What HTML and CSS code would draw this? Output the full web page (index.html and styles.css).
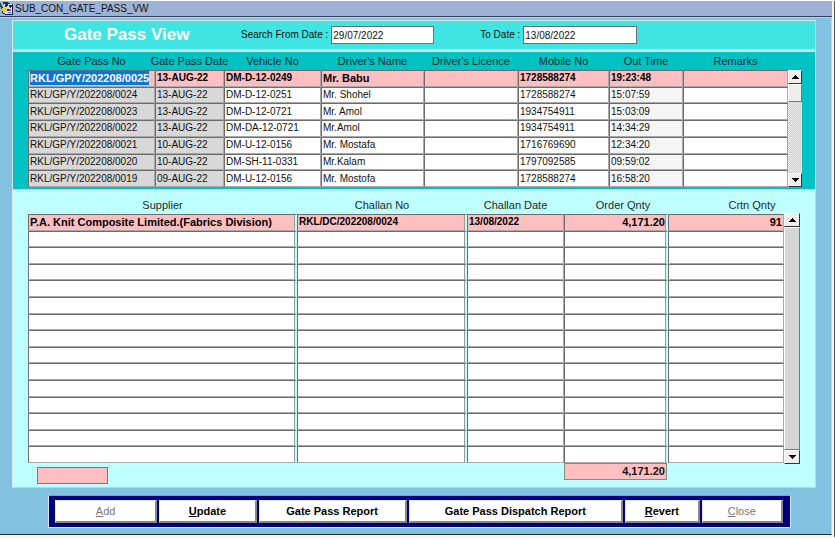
FILE: index.html
```html
<!DOCTYPE html>
<html lang="en">
<head>
<meta charset="utf-8">
<title>SUB_CON_GATE_PASS_VW</title>
<link rel="stylesheet" href="styles.css">
</head>
<body>
<div class="window">
  <header class="titlebar">
    <svg class="app-icon" viewBox="0 0 14 15" aria-hidden="true">
      <path d="M0 2h1v2h1v2h1v2H1V6H0z" fill="#0b4a54"/>
      <path d="M4 1h4v1h2v1h2v10H3V5h1z" fill="#d4dcf0"/>
      <path d="M3 1h5v1h2v1H8v1H5V3H3z" fill="#18306e"/>
      <path d="M3 5h2v2h2v2H6v2H4v2H3v-3H2V7h1z" fill="#e4d52c"/>
      <path d="M5 4h3v1H7v1H5zM9 4h3v2h-1v1h-1V6H9zM7 8h2v2H7z" fill="#35246c"/>
      <path d="M9 8h2v2H9z" fill="#c83e62"/>
      <path d="M12 3h1v11H5v-1h7zM2 10h1v2h2v1H3v-1H2z" fill="#18204c"/>
      <path d="M8 11h3v1H8z" fill="#4674d0"/>
    </svg>
    <span>SUB_CON_GATE_PASS_VW</span>
  </header>

  <main class="canvas">
    <form class="panel search">
      <h1>Gate Pass View</h1>
      <label for="from">Search From Date :</label>
      <input id="from" class="from" type="text" value="29/07/2022">
      <label for="to">To Date :</label>
      <input id="to" class="to" type="text" value="13/08/2022">
    </form>

    <section class="panel passes">
      <table class="grid pass-grid">
        <colgroup><col class="p1"><col class="p2"><col class="p3"><col class="p4"><col class="p5"><col class="p6"><col class="p7"><col class="p8"></colgroup>
        <thead>
          <tr><th>Gate Pass No</th><th><span class="centred">Gate Pass Date</span></th><th>Vehicle No</th><th>Driver's Name</th><th>Driver's Licence</th><th>Mobile No</th><th>Out Time</th><th>Remarks</th></tr>
        </thead>
        <tbody>
          <tr class="current"><td class="wide"><span class="selected">RKL/GP/Y/202208/0025</span></td><td>13-AUG-22</td><td>DM-D-12-0249</td><td class="wide">Mr. Babu</td><td></td><td>1728588274</td><td>19:23:48</td><td></td></tr>
          <tr><td>RKL/GP/Y/202208/0024</td><td>13-AUG-22</td><td>DM-D-12-0251</td><td>Mr. Shohel</td><td></td><td>1728588274</td><td>15:07:59</td><td></td></tr>
          <tr><td>RKL/GP/Y/202208/0023</td><td>13-AUG-22</td><td>DM-D-12-0721</td><td>Mr. Amol</td><td></td><td>1934754911</td><td>15:03:09</td><td></td></tr>
          <tr><td>RKL/GP/Y/202208/0022</td><td>13-AUG-22</td><td>DM-DA-12-0721</td><td>Mr.Amol</td><td></td><td>1934754911</td><td>14:34:29</td><td></td></tr>
          <tr><td>RKL/GP/Y/202208/0021</td><td>10-AUG-22</td><td>DM-U-12-0156</td><td>Mr. Mostafa</td><td></td><td>1716769690</td><td>12:34:20</td><td></td></tr>
          <tr><td>RKL/GP/Y/202208/0020</td><td>10-AUG-22</td><td>DM-SH-11-0331</td><td>Mr.Kalam</td><td></td><td>1797092585</td><td>09:59:02</td><td></td></tr>
          <tr><td>RKL/GP/Y/202208/0019</td><td>09-AUG-22</td><td>DM-U-12-0156</td><td>Mr. Mostofa</td><td></td><td>1728588274</td><td>16:58:20</td><td></td></tr>
        </tbody>
      </table>
      <div class="scroll">
        <button type="button" aria-label="Scroll up"><svg viewBox="0 0 7 4"><path d="M3 0h1v1h1v1h1v1h1v1H0V3h1V2h1V1h1z"/></svg></button>
        <div class="track"><div class="thumb"></div></div>
        <button type="button" aria-label="Scroll down"><svg viewBox="0 0 7 4"><path d="M0 0h7v1H6v1H5v1H4v1H3V3H2V2H1V1H0z"/></svg></button>
      </div>
    </section>

    <section class="panel challans">
      <table class="grid challan-grid">
        <colgroup><col class="c1"><col class="c2"><col class="c3"><col class="c4"><col class="c5"></colgroup>
        <thead>
          <tr><th>Supplier</th><th>Challan No</th><th>Challan Date</th><th class="order">Order Qnty</th><th class="crtn">Crtn Qnty</th></tr>
        </thead>
        <tbody>
          <tr class="current"><td class="wide">P.A. Knit Composite Limited.(Fabrics Division)</td><td>RKL/DC/202208/0024</td><td>13/08/2022</td><td class="num">4,171.20</td><td class="num">91</td></tr>
          <tr><td></td><td></td><td></td><td></td><td></td></tr>
          <tr><td></td><td></td><td></td><td></td><td></td></tr>
          <tr><td></td><td></td><td></td><td></td><td></td></tr>
          <tr><td></td><td></td><td></td><td></td><td></td></tr>
          <tr><td></td><td></td><td></td><td></td><td></td></tr>
          <tr><td></td><td></td><td></td><td></td><td></td></tr>
          <tr><td></td><td></td><td></td><td></td><td></td></tr>
          <tr><td></td><td></td><td></td><td></td><td></td></tr>
          <tr><td></td><td></td><td></td><td></td><td></td></tr>
          <tr><td></td><td></td><td></td><td></td><td></td></tr>
          <tr><td></td><td></td><td></td><td></td><td></td></tr>
          <tr><td></td><td></td><td></td><td></td><td></td></tr>
          <tr><td></td><td></td><td></td><td></td><td></td></tr>
          <tr><td></td><td></td><td></td><td></td><td></td></tr>
        </tbody>
        <tfoot>
          <tr><td><input class="entry" type="text" aria-label="Entry"></td><td></td><td></td><td><output class="total">4,171.20</output></td><td></td></tr>
        </tfoot>
      </table>
      <div class="scroll">
        <button type="button" aria-label="Scroll up"><svg viewBox="0 0 7 4"><path d="M3 0h1v1h1v1h1v1h1v1H0V3h1V2h1V1h1z"/></svg></button>
        <div class="track"><div class="thumb"></div></div>
        <button type="button" aria-label="Scroll down"><svg viewBox="0 0 7 4"><path d="M0 0h7v1H6v1H5v1H4v1H3V3H2V2H1V1H0z"/></svg></button>
      </div>
    </section>

    <nav class="actions">
      <button type="button" disabled><u>A</u>dd</button>
      <button type="button"><u>U</u>pdate</button>
      <button type="button">Gate Pass Report</button>
      <button type="button">Gate Pass Dispatch Report</button>
      <button type="button"><u>R</u>evert</button>
      <button type="button" disabled><u>C</u>lose</button>
    </nav>
  </main>
</div>
</body>
</html>
```

FILE: styles.css
```css
* { box-sizing: border-box; }

body {
  margin: 0;
  background: #f4f4f2;
  color: #111;
  font: 10px/12px "Liberation Sans", Arial, sans-serif;
}

.window {
  margin-right: 1px;
  border-top: 1px solid #fff;
  border-right: 2px solid #f4f4f2;
  border-bottom: 2px solid #f4f4f2;
  box-shadow: 1px 1px 0 #555;
}

.titlebar {
  display: flex;
  align-items: center;
  gap: 1px;
  height: 16px;
  background: #9db3d6;
  border-bottom: 1px solid #34405c;
}

.app-icon { width: 14px; height: 15px; }

.canvas {
  padding: 2px 15px 6px 12px;
  background: #82c1e0;
  border-top: 1px solid #a6d4ea;
  border-right: 1px solid #b4d8e8;
  border-bottom: 1px solid #222;
}

.panel {
  border: 1px solid #b8d8d8;
  border-top-color: #d4e8e8;
  border-left-color: #d4e8e8;
}

/* Search strip */
.search {
  display: flex;
  align-items: center;
  height: 31px;
  background: #40e4e2;
  border-bottom: 2px solid #c4dcd8;
}

.search h1 {
  width: 228px;
  margin: 0;
  padding-left: 51px;
  color: #fff;
  font-size: 17px;
  line-height: 20px;
}

.search input {
  height: 18px;
  margin-left: 3px;
  padding: 0 1px;
  border: 1px solid #707070;
  background: #fff;
  color: #111;
  font: inherit;
}

.search .from { width: 103px; margin-right: 46px; }
.search .to { width: 114px; }

/* Record grids */
.passes, .challans { display: flex; }

.passes {
  padding: 0 13px 2px 15px;
  background: #00c2c2;
}

.challans {
  padding: 6px 15px 3px 15px;
  background: #c0ffff;
  border-top-width: 2px;
}

.grid {
  flex: 1;
  width: 0;
  table-layout: fixed;
  border-spacing: 0;
}

.grid th {
  height: 18px;
  padding: 0;
  color: #102c30;
  font-size: 11px;
  font-weight: 400;
  white-space: nowrap;
}

.centred { display: flex; justify-content: center; }

.grid tbody td {
  height: 16px;
  padding: 0 1px;
  border: 1px solid #6c6c6c;
  border-right-color: #a8a8a8;
  border-bottom-color: #a8a8a8;
  background: #fff;
  line-height: 14px;
  white-space: nowrap;
}

.pass-grid { height: 135px; }
.challan-grid { height: 286px; }
.challan-grid th { height: 16px; padding-bottom: 2px; }

.p1 { width: 127px; }
.p2 { width: 69px; }
.p3 { width: 97px; }
.p4 { width: 103px; }
.p5 { width: 94px; }
.p6 { width: 91px; }
.p7 { width: 74px; }
.p8 { width: 105px; }

.c1 { width: 269px; }
.c2 { width: 170px; }
.c3 { width: 97px; }
.c4 { width: 104px; }
.c5 { width: 116px; }

.pass-grid tbody td:nth-child(-n+2) { background: #d8d8d8; }
.pass-grid tbody td:nth-child(7) { background: #f5f5f5; }

.grid tbody .current td {
  background: #ffbfc0;
  color: #000;
  font-weight: 700;
}

.grid .wide { font-size: 11px; }

.selected {
  display: inline-block;
  background: #0878d8;
  color: #fff;
}

.grid .num { text-align: right; font-size: 11px; }
.grid .order { padding-left: 14px; }
.grid .crtn { padding-left: 52px; }

.challan-grid tbody td:nth-child(1),
.challan-grid tbody td:nth-child(2),
.challan-grid tbody td:nth-child(4) {
  border-right: 2px solid #c0ffff;
  box-shadow: inset -1px 0 0 #999;
}

.grid tfoot td {
  height: 21px;
  padding: 0;
  vertical-align: top;
}

.entry {
  display: block;
  width: 71px;
  height: 17px;
  margin: 4px 0 0 9px;
  border: 1px solid #777;
  background: #ffbfc0;
}

.total {
  display: block;
  height: 17px;
  margin-right: 1px;
  padding: 0 1px;
  border: 1px solid #888;
  background: #ffbfc0;
  font-size: 11px;
  font-weight: 700;
  line-height: 15px;
  text-align: right;
}

/* Scroll bars */
.scroll {
  display: flex;
  flex-direction: column;
  width: 15px;
  margin-top: 18px;
}

.challans .scroll { width: 16px; margin: 15px 0 20px; }

.scroll button {
  display: flex;
  align-items: center;
  justify-content: center;
  height: 14px;
  padding: 0;
  border: 1px solid #fff;
  border-right-color: #333;
  border-bottom-color: #333;
  background: #eee;
}

.scroll svg { width: 7px; height: 4px; }

.track {
  flex: 1;
  background: repeating-conic-gradient(#ccc 0 25%, #eee 0 50%) 0 0 / 2px 2px;
}

.thumb {
  height: 18px;
  border: 1px solid #fff;
  border-right-color: #777;
  border-bottom-color: #777;
  background: #eee;
}

.challans .thumb { height: 100%; background: #d6d6d6; }

/* Action bar */
.actions {
  display: grid;
  grid-template-columns: 103fr 98fr 149fr 216fr 75fr 82fr;
  gap: 2px;
  margin: 7px 25px 0 36px;
  padding: 4px 7px 4px 6px;
  border: 1px solid #dce8f4;
  border-top-color: #8a9cc0;
  background: #000080;
}

.actions button {
  height: 23px;
  padding: 0;
  border: 1px solid #e8e8f4;
  border-right: 2px solid #888;
  border-bottom: 2px solid #888;
  background: #fff;
  color: #000;
  font: bold 11px/14px "Liberation Sans", Arial, sans-serif;
}

.actions button:disabled { color: #777; font-weight: 400; }
```
